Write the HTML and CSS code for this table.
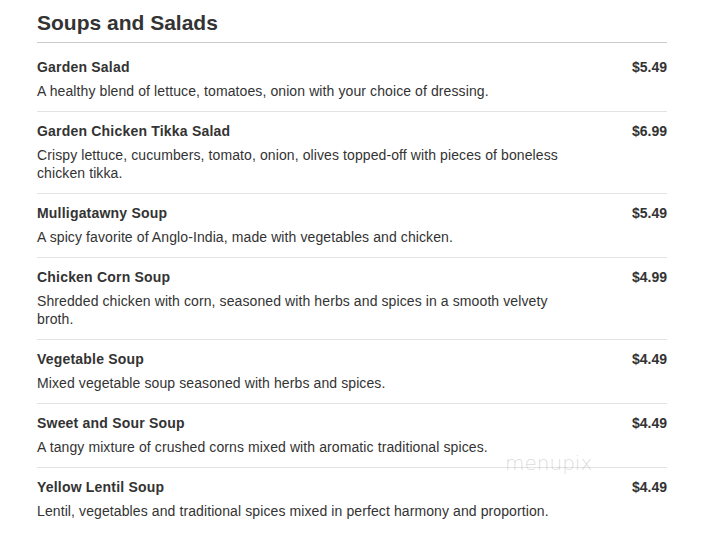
FILE: index.html
```html
<!DOCTYPE html>
<html>
<head>
<meta charset="utf-8">
<link rel="stylesheet" href="styles.css">
</head>
<body>
<div class="menu">
  <h2 class="section-title">Soups and Salads</h2>
  <div class="item first">
    <div class="info">
      <div class="name">Garden Salad</div>
      <div class="desc">A healthy blend of lettuce, tomatoes, onion with your choice of dressing.</div>
    </div>
    <div class="price">$5.49</div>
  </div>
  <div class="item">
    <div class="info">
      <div class="name">Garden Chicken Tikka Salad</div>
      <div class="desc">Crispy lettuce, cucumbers, tomato, onion, olives topped-off with pieces of boneless chicken tikka.</div>
    </div>
    <div class="price">$6.99</div>
  </div>
  <div class="item">
    <div class="info">
      <div class="name">Mulligatawny Soup</div>
      <div class="desc">A spicy favorite of Anglo-India, made with vegetables and chicken.</div>
    </div>
    <div class="price">$5.49</div>
  </div>
  <div class="item">
    <div class="info">
      <div class="name">Chicken Corn Soup</div>
      <div class="desc">Shredded chicken with corn, seasoned with herbs and spices in a smooth velvety broth.</div>
    </div>
    <div class="price">$4.99</div>
  </div>
  <div class="item">
    <div class="info">
      <div class="name">Vegetable Soup</div>
      <div class="desc">Mixed vegetable soup seasoned with herbs and spices.</div>
    </div>
    <div class="price">$4.49</div>
  </div>
  <div class="item">
    <div class="info">
      <div class="name">Sweet and Sour Soup</div>
      <div class="desc">A tangy mixture of crushed corns mixed with aromatic traditional spices.</div>
    </div>
    <div class="price">$4.49</div>
  </div>
  <div class="item">
    <div class="info">
      <div class="name">Yellow Lentil Soup</div>
      <div class="desc">Lentil, vegetables and traditional spices mixed in perfect harmony and proportion.</div>
    </div>
    <div class="price">$4.49</div>
  </div>
  <div class="watermark">menupix</div>
</div>
</body>
</html>
```

FILE: styles.css
```css
html, body {
  margin: 0;
  padding: 0;
  background: #fff;
}
body {
  font-family: "Liberation Sans", Arial, sans-serif;
  color: #333;
}
.menu {
  position: relative;
  width: 630px;
  margin-left: 37px;
  padding-top: 10px;
}
.section-title {
  margin: 0;
  font-size: 21px;
  line-height: 26px;
  font-weight: bold;
  color: #333;
  padding-bottom: 6px;
  border-bottom: 1px solid #ccc;
}
.item {
  display: flex;
  justify-content: space-between;
  align-items: flex-start;
  padding: 9px 0 11px;
  border-top: 1px solid #e3e3e3;
}
.item.first {
  border-top: none;
  padding-top: 14px;
}
.info {
  width: 535px;
}
.name {
  font-size: 14px;
  font-weight: bold;
  line-height: 20px;
  letter-spacing: 0.2px;
}
.desc {
  font-size: 14px;
  line-height: 18px;
  margin-top: 5px;
  letter-spacing: 0.1px;
}
.price {
  font-size: 14px;
  font-weight: bold;
  line-height: 20px;
  text-align: right;
}
.watermark {
  position: absolute;
  left: 468px;
  top: 451px;
  font-family: "DejaVu Sans", sans-serif;
  font-size: 20px;
  font-weight: 200;
  letter-spacing: 0px;
  color: rgba(150, 150, 150, 0.35);
}
```
